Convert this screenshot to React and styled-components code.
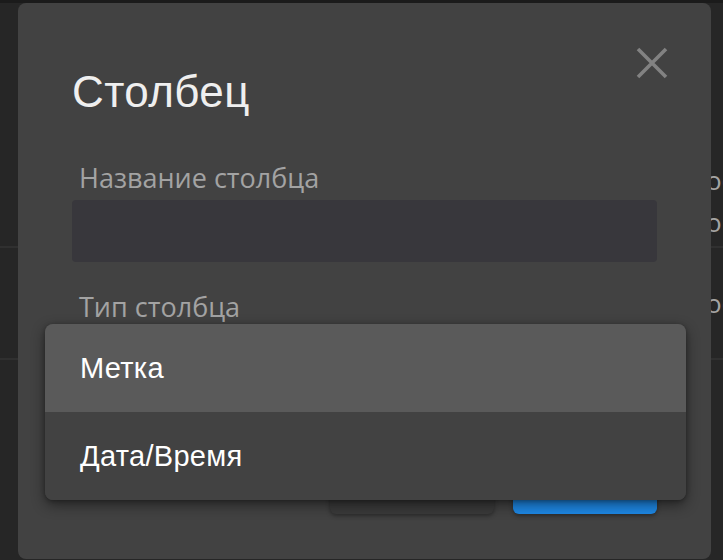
import React from 'react'
import styled, { createGlobalStyle } from 'styled-components'

const Global = createGlobalStyle`
  html, body {
    margin: 0;
    padding: 0;
    background: #262626;
    overflow: hidden;
  }
`

const rows = [
  { lines: ['ос', 'ов'], height: 90 },
  { lines: ['ос'], height: 110 },
  { lines: [''], height: 200 },
]

const App = () => {
  return (
    <>
      <Global />
      <Page>
        <Table>
          {rows.map((row, index) => (
            <Row key={index} h={row.height}>
              <Spacer />
              <Cell>
                {row.lines.map((line, i) => (
                  <div key={i}>{line}</div>
                ))}
              </Cell>
            </Row>
          ))}
        </Table>

        <Dialog>
          <Close aria-label="close">
            <svg width="32" height="32" viewBox="0 0 32 32">
              <path d="M2 2 L30 30 M30 2 L2 30" stroke="#828282" strokeWidth="3.6" />
            </svg>
          </Close>
          <Title>Столбец</Title>
          <Label top={48}>Название столбца</Label>
          <Input />
          <Label top={29}>Тип столбца</Label>
          <Select />
          <Footer>
            <Button>Отмена</Button>
            <Button primary="true">Готово</Button>
          </Footer>

          <Menu>
            <MenuItem active="true">Метка</MenuItem>
            <MenuItem>Дата/Время</MenuItem>
          </Menu>
        </Dialog>
      </Page>
    </>
  )
}

export default App

const Page = styled.div`
  position: relative;
  width: 723px;
  height: 560px;
  background: #262626;
  border-top: 3px solid #1b1b1b;
  box-sizing: border-box;
  overflow: hidden;
`

const Table = styled.div`
  display: flex;
  flex-direction: column;
  padding-top: 153px;
`

const Row = styled.div`
  display: grid;
  grid-template-columns: 706px 1fr;
  align-items: center;
  height: ${p => p.h}px;
  border-bottom: 2px solid #303030;
`

const Spacer = styled.div``

const Cell = styled.div`
  font-family: "Open Sans", sans-serif;
  font-size: 26px;
  line-height: 42px;
  color: #a3a3a3;
  white-space: nowrap;
  overflow: hidden;
`

const Dialog = styled.div`
  position: absolute;
  left: 18px;
  top: 0;
  width: 693px;
  height: 556px;
  box-sizing: border-box;
  padding: 67px 54px 0 54px;
  background: #424242;
  border-radius: 8px;
  display: flex;
  flex-direction: column;
`

const Close = styled.button`
  position: absolute;
  top: 44px;
  right: 43px;
  width: 32px;
  height: 32px;
  padding: 0;
  border: none;
  background: none;
  display: flex;
`

const Title = styled.h2`
  margin: 0;
  font-family: "Liberation Sans", Arial, sans-serif;
  font-weight: normal;
  font-size: 44px;
  line-height: 44px;
  letter-spacing: 0.4px;
  color: #efefef;
`

const Label = styled.label`
  display: block;
  margin-top: ${p => p.top}px;
  padding-left: 7px;
  font-family: "Open Sans", sans-serif;
  font-size: 27px;
  line-height: 32px;
  color: #a3a3a3;
`

const Input = styled.div`
  margin-top: 6px;
  height: 62px;
  background: #38373c;
  border-radius: 4px;
`

const Select = styled.div`
  margin-top: 1px;
  height: 62px;
  background: #38373c;
  border-radius: 4px;
`

const Footer = styled.div`
  display: flex;
  justify-content: flex-end;
  gap: 19px;
  margin-top: 84px;
`

const Button = styled.button`
  height: 44px;
  width: ${p => (p.primary ? 144 : 164)}px;
  border: none;
  border-radius: 6px;
  background: ${p => (p.primary ? '#1e88e5' : '#3a3a3a')};
  box-shadow: 0 2px 4px rgba(0, 0, 0, 0.35);
  color: #fff;
  font-family: "Liberation Sans", Arial, sans-serif;
  font-size: 18px;
`

const Menu = styled.div`
  position: absolute;
  left: 27px;
  top: 321px;
  width: 641px;
  border-radius: 8px;
  overflow: hidden;
  background: #424242;
  box-shadow: 0 5px 14px rgba(0, 0, 0, 0.45), 0 1px 4px rgba(0, 0, 0, 0.3);
  display: flex;
  flex-direction: column;
`

const MenuItem = styled.div`
  height: 88px;
  display: flex;
  align-items: center;
  padding-left: 35px;
  background: ${p => (p.active ? '#5a5a5a' : '#424242')};
  font-family: "Liberation Sans", Arial, sans-serif;
  font-size: 29px;
  letter-spacing: 0.3px;
  color: #fff;
`
